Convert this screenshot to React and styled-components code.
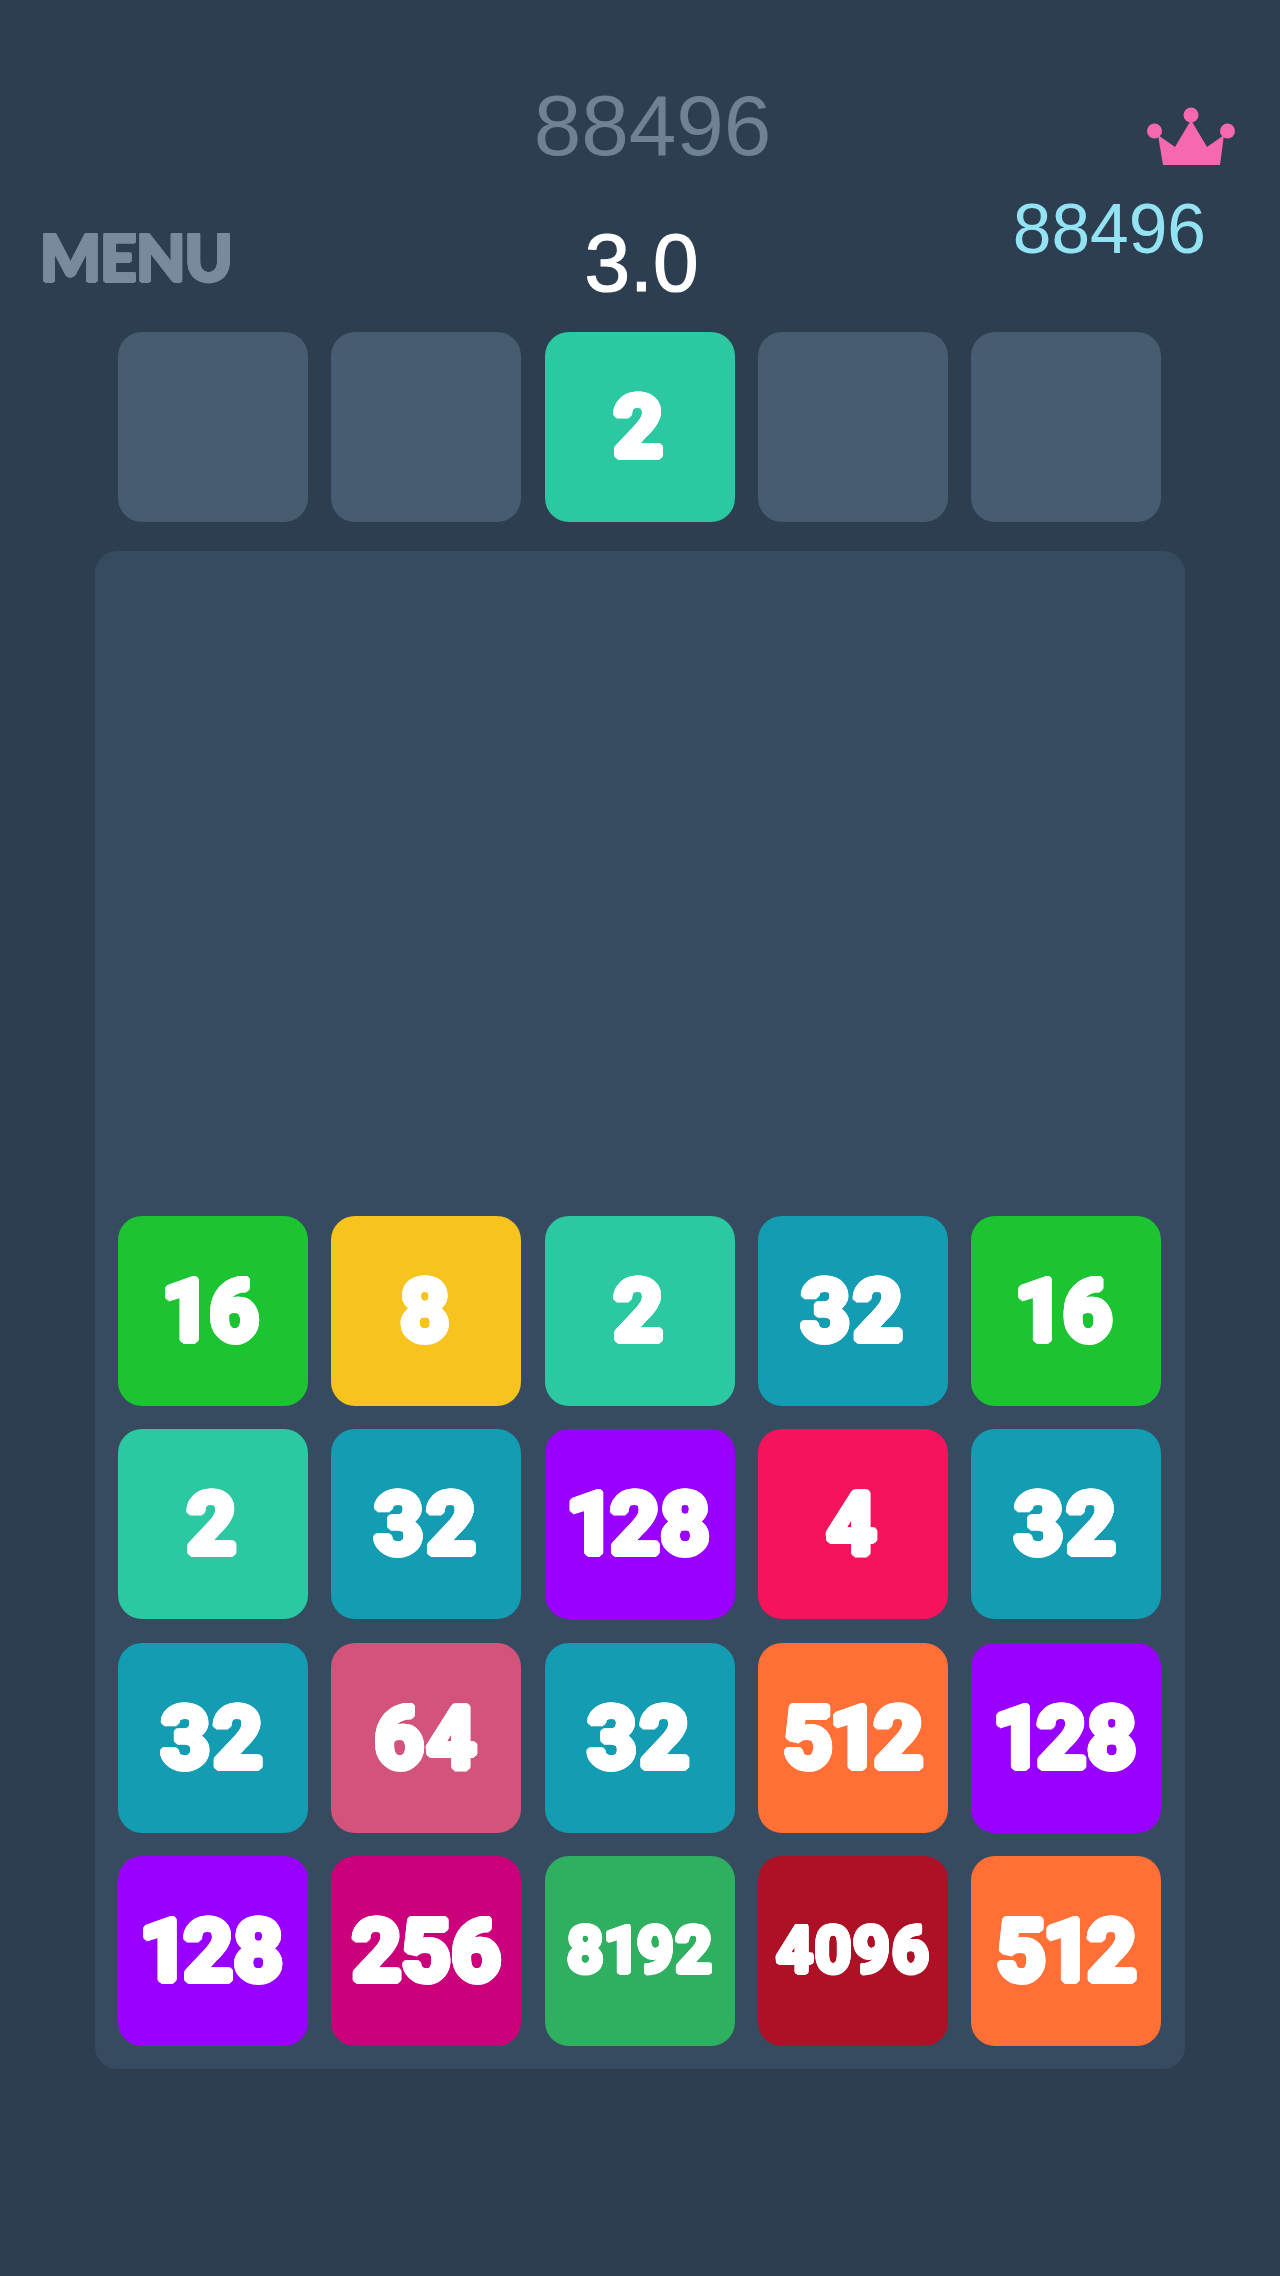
import React from "react";
import styled, { createGlobalStyle } from "styled-components";

const Global = createGlobalStyle`
  html, body { margin: 0; padding: 0; background: #2c3e50; }
  #root { width: 1280px; height: 2276px; overflow: hidden; }
`;

const Screen = styled.main`
  width: 1280px;
  height: 2276px;
  background: #2c3e50;
  display: flex;
  flex-direction: column;
  box-sizing: border-box;
  font-family: "Liberation Sans", Arial, sans-serif;
`;

const Header = styled.header`
  height: 332px;
  padding: 0 45px 0 40px;
  box-sizing: border-box;
  display: grid;
  grid-template-columns: 480px 250px 1fr;
`;

const MenuColumn = styled.div`
  display: flex;
  align-items: flex-start;
  padding-top: 222px;
`;

const round = (r, color) =>
  Array.from({ length: 16 }, (_, i) => {
    const a = (i / 16) * Math.PI * 2;
    return `${(Math.cos(a) * r).toFixed(2)}px ${(Math.sin(a) * r).toFixed(2)}px 0 ${color}`;
  }).join(",");

const MenuLabel = styled.span`
  font-family: Lato, sans-serif;
  font-weight: 900;
  font-size: 64px;
  line-height: 70px;
  letter-spacing: -0.8px;
  color: #788a9c;
  text-shadow: ${round(1.5, "#788a9c")};
`;

const CenterColumn = styled.div`
  display: flex;
  flex-direction: column;
  align-items: center;
`;

const Score = styled.div`
  margin: 77px 0 0 15px;
  font-size: 85.5px;
  line-height: 98px;
  color: #6f8295;
`;

const Timer = styled.div`
  margin: 47px 7px 0 0;
  font-size: 82px;
  line-height: 82px;
  color: #ffffff;
  -webkit-text-stroke: 1.2px #ffffff;
`;

const BestColumn = styled.div`
  display: flex;
  flex-direction: column;
  align-items: flex-end;
  padding-top: 107px;
`;

const Crown = styled.svg`
  width: 88px;
  height: 58px;
  display: block;
  flex: none;
`;

const Best = styled.div`
  margin: 25px 29px 0 0;
  font-size: 69.5px;
  line-height: 78px;
  color: #94e3f4;
`;

const PreviewRow = styled.section`
  display: grid;
  grid-template-columns: repeat(5, 190px);
  column-gap: 23.33px;
  margin: 0 0 0 118px;
`;

const Board = styled.section`
  margin: 29px 0 0 95px;
  width: 1090px;
  height: 1518px;
  box-sizing: border-box;
  background: #364b5f;
  border-radius: 22px;
  padding: 23px;
  display: grid;
  grid-template-columns: repeat(5, 190px);
  grid-auto-rows: 190px;
  gap: 23.33px;
  align-content: end;
`;

const Tile = styled.div`
  width: 190px;
  height: 190px;
  border-radius: 24px;
  background: ${(p) => p.$bg};
  display: flex;
  align-items: center;
  justify-content: center;
`;

const TileNumber = styled.span`
  font-family: Roboto, sans-serif;
  font-weight: 700;
  font-variant-numeric: proportional-nums;
  font-size: ${(p) => p.$size}px;
  letter-spacing: ${(p) => p.$track}px;
  line-height: 1;
  color: #fff;
  text-shadow: ${(p) => round(p.$bold, "#fff")};
`;

const palette = {
  2: "#2cc8a2",
  4: "#f5145c",
  8: "#f7c41f",
  16: "#1cc432",
  32: "#149cb2",
  64: "#d3547b",
  128: "#9900ff",
  256: "#cc007a",
  512: "#ff6f36",
  4096: "#ae1126",
  8192: "#2eb060",
};

const rows = [
  [16, 8, 2, 32, 16],
  [2, 32, 128, 4, 32],
  [32, 64, 32, 512, 128],
  [128, 256, 8192, 4096, 512],
];

const textStyle = (value) => {
  if (value >= 1000) return { size: 64, track: 1, bold: 2.5 };
  if (value >= 100) return { size: 86, track: 0, bold: 3.5 };
  return { size: 86, track: 3, bold: 3.5 };
};

function NumberTile({ value }) {
  const t = textStyle(value);
  return (
    <Tile $bg={palette[value]}>
      <TileNumber $size={t.size} $track={t.track} $bold={t.bold}>{value}</TileNumber>
    </Tile>
  );
}

export default function App() {
  return (
    <Screen>
      <Global />
      <Header>
        <MenuColumn>
          <MenuLabel>MENU</MenuLabel>
        </MenuColumn>
        <CenterColumn>
          <Score>88496</Score>
          <Timer>3.0</Timer>
        </CenterColumn>
        <BestColumn>
          <Crown viewBox="0 0 88 58" aria-hidden="true">
            <g fill="#f668b2">
              <circle cx="44" cy="8" r="7.5" />
              <circle cx="7.5" cy="24" r="7.5" />
              <circle cx="80.5" cy="24" r="7.5" />
              <path d="M44 13 L60 40 L77 28 L73 58 L16 58 L11 28 L28 40 Z" />
            </g>
          </Crown>
          <Best>88496</Best>
        </BestColumn>
      </Header>
      <PreviewRow>
        <Tile $bg="#475c70" />
        <Tile $bg="#475c70" />
        <NumberTile value={2} />
        <Tile $bg="#475c70" />
        <Tile $bg="#475c70" />
      </PreviewRow>
      <Board>
        {rows.flat().map((v, i) => (
          <NumberTile key={i} value={v} />
        ))}
      </Board>
    </Screen>
  );
}
